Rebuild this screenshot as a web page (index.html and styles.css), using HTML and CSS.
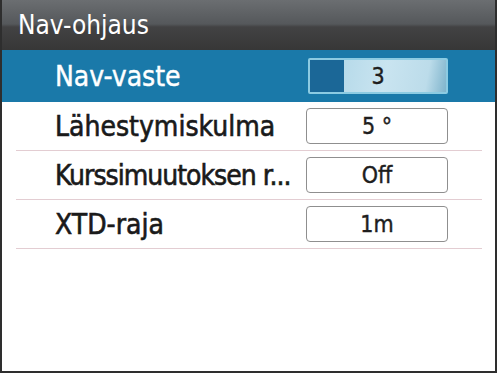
FILE: index.html
```html
<!DOCTYPE html>
<html lang="fi">
<head>
    <meta charset="UTF-8">
    <meta name="viewport" content="width=device-width, initial-scale=1.0">
    <title>Nav-ohjaus</title>
    <link rel="stylesheet" href="styles.css">
</head>
<body>

<div class="dialog">
    <div class="title-bar">Nav-ohjaus</div>

    <div class="menu-row selected">
        <span class="label">Nav-vaste</span>
        <div class="value-box slider">
            <span class="slider-knob"></span>
            <span class="value">3</span>
        </div>
    </div>

    <div class="menu-row">
        <span class="label">Lähestymiskulma</span>
        <div class="value-box"><span class="value">5 °</span></div>
    </div>

    <div class="menu-row">
        <span class="label tight">Kurssimuutoksen r...</span>
        <div class="value-box"><span class="value">Off</span></div>
    </div>

    <div class="menu-row">
        <span class="label">XTD-raja</span>
        <div class="value-box"><span class="value">1m</span></div>
    </div>
</div>

</body>
</html>
```

FILE: styles.css
```css
body {
    margin: 0;
    background-color: #ffffff;
    font-family: "DejaVu Sans Condensed", "DejaVu Sans", sans-serif;
}
.dialog {
    width: 497px;
    height: 373px;
    box-sizing: border-box;
    border: 2px solid #2e2e2e;
    border-top: none;
    background-color: #ffffff;
}
.title-bar {
    height: 50px;
    box-sizing: border-box;
    padding-left: 16px;
    line-height: 50px;
    font-size: 26px;
    color: #ffffff;
    background: linear-gradient(#6b6e71 0%, #55585b 48%, #424243 54%, #373737 100%);
}
.menu-row {
    display: flex;
    align-items: center;
    justify-content: space-between;
    height: 48px;
    margin: 0 13px 0 14px;
    padding: 0 34px 0 39px;
    border-bottom: 1px solid #e3cdd2;
}
.menu-row.selected {
    height: 52px;
    margin: 0;
    padding: 0 47px 0 53px;
    border-bottom: none;
    background-color: #1a79a9;
}
.label {
    font-size: 28px;
    color: #1a1a1a;
    white-space: nowrap;
    -webkit-text-stroke: 0.6px #1a1a1a;
}
.label.tight {
    letter-spacing: -1px;
}
.selected .label {
    color: #ffffff;
    -webkit-text-stroke: 0.4px #ffffff;
}
.value-box {
    position: relative;
    flex-shrink: 0;
    display: flex;
    align-items: center;
    justify-content: center;
    width: 142px;
    height: 36px;
    box-sizing: border-box;
    border: 1px solid #8f8f8f;
    border-radius: 4px;
    background-color: #ffffff;
}
.value {
    font-size: 23px;
    color: #1e1e1e;
    -webkit-text-stroke: 0.4px #1e1e1e;
}
.slider {
    width: 140px;
    border: 2px solid #8ccbe2;
    border-radius: 2px;
    background: linear-gradient(100deg, #a9d3e5 0%, #c9e4f0 55%, #bcdcea 85%, #7fb4cc 100%);
}
.slider-knob {
    position: absolute;
    left: 0;
    top: 0;
    bottom: 0;
    width: 34px;
    background-color: #1b6797;
}
```
